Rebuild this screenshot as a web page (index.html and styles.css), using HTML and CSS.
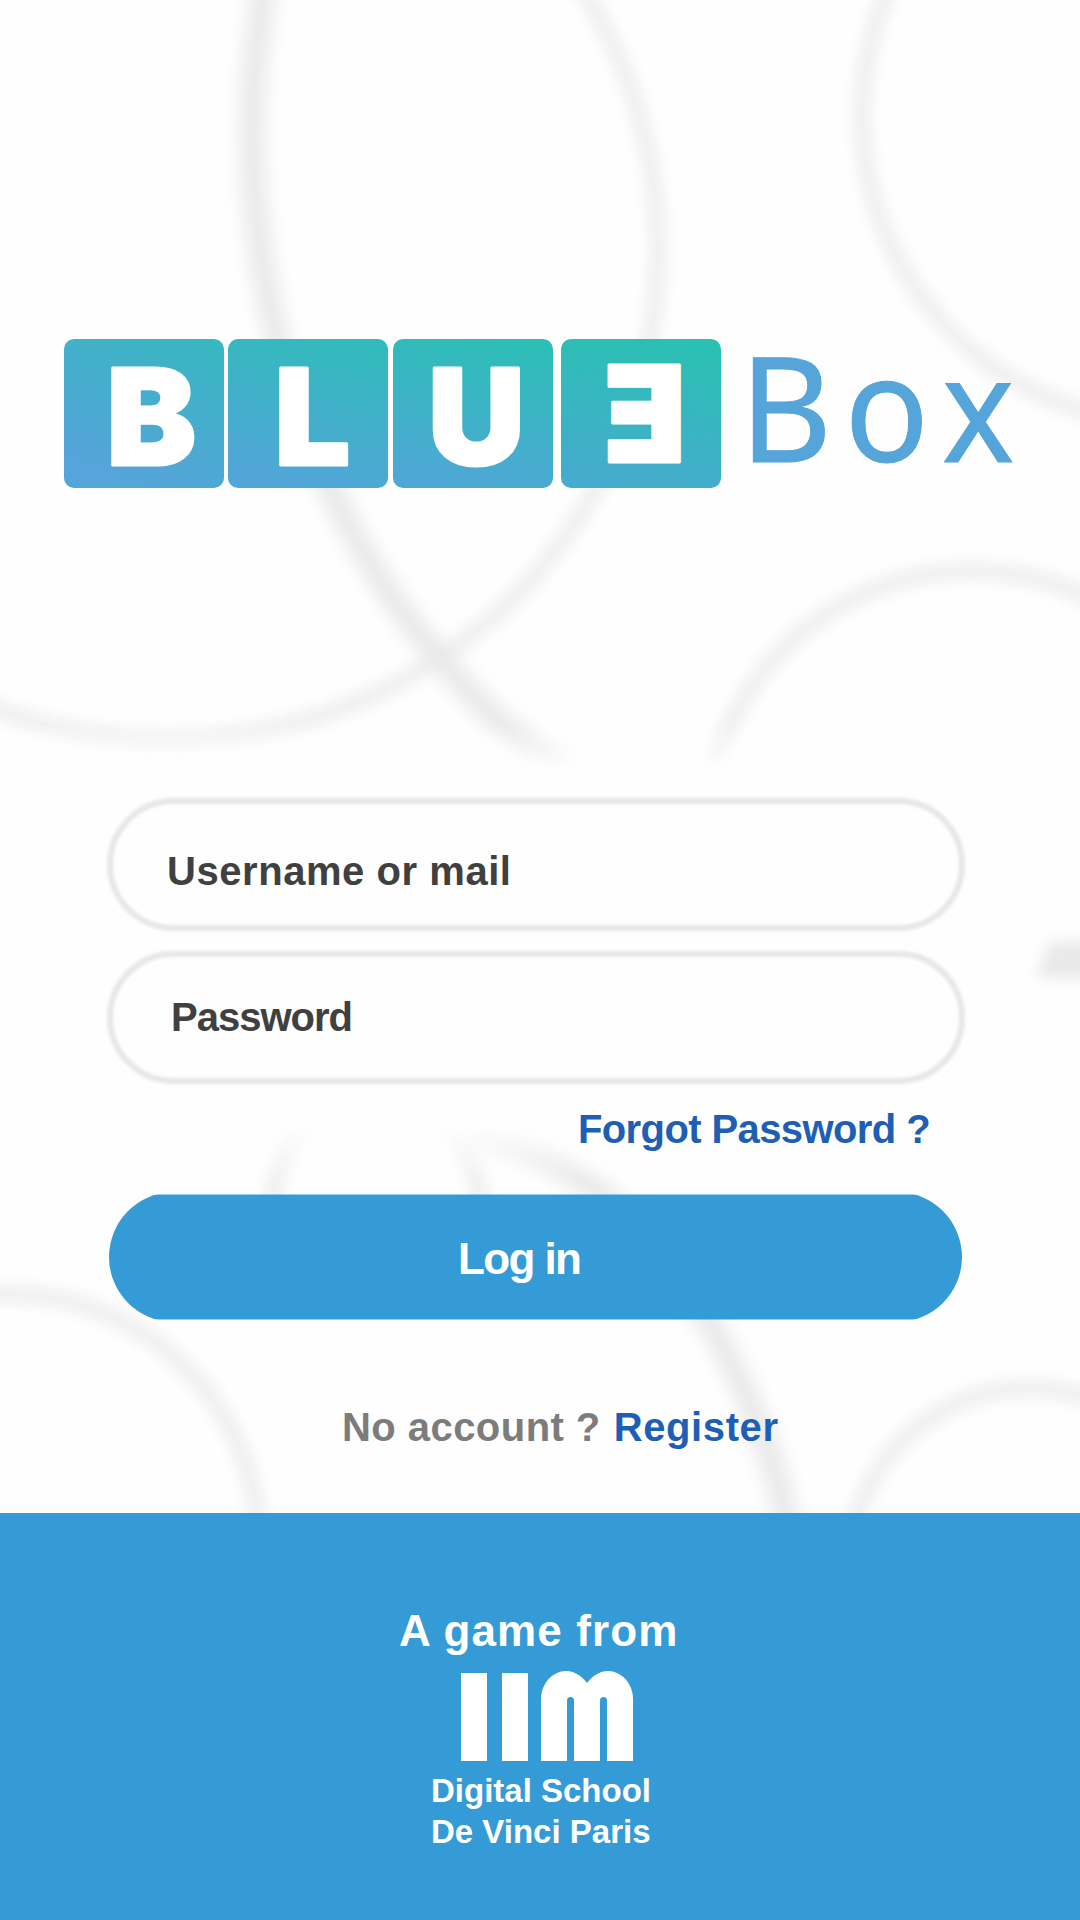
FILE: index.html
```html
<!DOCTYPE html>
<html lang="en">
<head>
<meta charset="utf-8">
<title>Blue Box</title>
<link rel="stylesheet" href="styles.css">
</head>
<body>
<div class="page">
  <svg class="rings" viewBox="0 0 1080 1514" aria-hidden="true">
    <defs>
      <filter id="soft" filterUnits="userSpaceOnUse" x="-400" y="-400" width="2000" height="2300"><feGaussianBlur stdDeviation="7"/></filter>
      <filter id="softer" filterUnits="userSpaceOnUse" x="-400" y="-400" width="2000" height="2300"><feGaussianBlur stdDeviation="9"/></filter>
      <linearGradient id="fadeDown" gradientUnits="userSpaceOnUse" x1="0" y1="725" x2="0" y2="770"><stop stop-color="#fff"/><stop offset="1" stop-color="#000"/></linearGradient>
      <linearGradient id="fadeUp" gradientUnits="userSpaceOnUse" x1="0" y1="1125" x2="0" y2="1180"><stop stop-color="#000"/><stop offset="1" stop-color="#fff"/></linearGradient>
      <mask id="upper" maskUnits="userSpaceOnUse" x="0" y="0" width="1080" height="800"><rect width="1080" height="800" fill="url(#fadeDown)"/></mask>
      <mask id="lower" maskUnits="userSpaceOnUse" x="0" y="1100" width="1080" height="414"><rect y="1100" width="1080" height="414" fill="url(#fadeUp)"/></mask>
    </defs>
    <g mask="url(#upper)">
      <g class="ring" filter="url(#soft)">
        <circle cx="168" cy="250" r="490"/>
        <circle cx="1170" cy="115" r="308"/>
        <circle cx="972" cy="838" r="267"/>
      </g>
      <path class="ring wide" filter="url(#softer)" d="M266-20C246 90 246 210 277 337C288 390 306 440 331 490C362 555 398 612 440 658C480 705 515 742 570 772"/>
    </g>
    <g mask="url(#lower)">
      <g class="ring" filter="url(#soft)">
        <circle cx="8" cy="1545" r="251"/>
        <path d="M306 1120C284 1145 272 1180 271 1215M444 1120C468 1145 480 1180 482 1215"/>
        <circle cx="1030" cy="1569" r="181"/>
      </g>
      <path class="ring wide" filter="url(#softer)" d="M470 1130C580 1160 640 1215 708 1320C748 1390 776 1460 789 1530"/>
    </g>
    <path class="stub" filter="url(#soft)" d="M1050 942H1120V978H1036Z"/>
  </svg>

  <header class="brand">
    <svg class="logo" viewBox="0 0 960 160" role="img" aria-label="BLUE Box">
      <defs>
        <linearGradient id="t1" x1=".3" y1=".9" x2=".75" y2="-.15"><stop stop-color="#55a4da"/><stop offset="1" stop-color="#35b9bf"/></linearGradient>
        <linearGradient id="t2" x1=".4" y1="1" x2=".65" y2="0"><stop stop-color="#52a5d9"/><stop offset="1" stop-color="#32bbbc"/></linearGradient>
        <linearGradient id="t3" x1=".4" y1="1" x2=".6" y2="0"><stop stop-color="#4fa7d6"/><stop offset="1" stop-color="#2dbeb7"/></linearGradient>
        <linearGradient id="t4" x1=".4" y1="1" x2=".6" y2="0"><stop stop-color="#46abce"/><stop offset="1" stop-color="#2ac0b3"/></linearGradient>
      </defs>
      <rect x="4" y="4" width="160" height="149" rx="10" fill="url(#t1)"/>
      <rect x="168" y="4" width="160" height="149" rx="10" fill="url(#t2)"/>
      <rect x="333" y="4" width="160" height="149" rx="10" fill="url(#t3)"/>
      <rect x="501" y="4" width="160" height="149" rx="10" fill="url(#t4)"/>
      <g class="tile-letter">
        <text x="46.5" y="130">B</text>
        <text x="214.5" y="130">L</text>
        <text x="368" y="130">U</text>
        <text transform="translate(625.5 127) scale(-1 1)">E</text>
      </g>
      <g class="box">
        <text transform="translate(679.5 126.5) scale(.97 1)">B</text>
        <text transform="translate(784.5 126.5) scale(.95 1)">o</text>
        <text transform="translate(882 126.5) scale(.93 1)">x</text>
      </g>
    </svg>
  </header>

  <main class="login">
    <label class="field field-user"><span>Username or mail</span></label>
    <label class="field field-pass"><span>Password</span></label>
    <a class="forgot">Forgot Password ?</a>
    <button class="submit" type="button"><span>Log in</span></button>
    <p class="signup"><span class="ask">No account ?</span><a class="register">Register</a></p>
  </main>

  <footer class="credits">
    <p class="from">A game from</p>
    <div class="mark" aria-hidden="true"><i class="bar"></i><i class="bar"></i><i class="arches"><b></b><b></b></i></div>
    <p class="school school-a">Digital School</p>
    <p class="school school-b">De Vinci Paris</p>
  </footer>
</div>
</body>
</html>
```
FILE: styles.css
```css
* { box-sizing: border-box; }
body { margin: 0; background: #fefefe; font-family: "Liberation Sans", Arial, sans-serif; font-weight: 700; }
p { margin: 0; }
.page { position: relative; width: 1080px; height: 1920px; overflow: hidden; display: flex; flex-direction: column; }

.rings { position: absolute; left: 0; top: 0; width: 1080px; height: 1514px; z-index: -1; }
.ring { fill: none; stroke: #eeeeee; stroke-width: 16; }
.wide { stroke: #e7e7e7; stroke-width: 22; }
.stub { fill: #e9e9e9; }

.brand { height: 798px; padding: 335px 60px 0; }
.logo { display: block; width: 960px; height: 160px; overflow: visible; }
.tile-letter { font: 900 134px Inter, sans-serif; fill: #fff; stroke: #fff; stroke-width: 3; stroke-linejoin: round; }
.box { font: 400 147px "Noto Sans", sans-serif; fill: #55a4da; stroke: #55a4da; stroke-width: 1; }

.login { height: 715px; padding: 0 115px 0 107px; display: flex; flex-direction: column; }
.field { position: relative; height: 133px; flex: none; display: flex; align-items: center; color: #404040; font-size: 40px; line-height: 46px; }
.field::before { content: ""; position: absolute; inset: 0; border: 6px solid #e7e7e7; border-radius: 67px; filter: blur(1.4px); background: #fefefe; z-index: -1; }
.field-user { padding: 13px 0 0 60px; letter-spacing: .55px; }
.field-pass { margin-top: 20px; padding: 0 0 2px 64px; letter-spacing: -1px; }
.forgot { align-self: flex-end; margin: 21px 35px 0 0; font-size: 40px; line-height: 48px; letter-spacing: -.6px; color: #1e5fb5; white-space: nowrap; }
.submit { margin: 39px 0 0 2px; width: 853px; height: 130px; flex: none; padding: 4px 0 0 349px; border: 0; border-radius: 65px; clip-path: inset(2.5px 0); background: #359bd6; color: #fff; font: inherit; font-size: 44px; text-align: left; letter-spacing: -1.6px; }
.signup { display: flex; padding-left: 235px; margin-top: 81px; font-size: 40px; line-height: 48px; gap: 13px; white-space: nowrap; }
.ask { color: #7c7c7c; letter-spacing: .45px; }
.register { color: #1e5fb5; letter-spacing: .6px; }

.credits { height: 407px; background: #359bd6; color: #fff; padding-top: 92px; display: flex; flex-direction: column; white-space: nowrap; }
.from { padding-left: 399px; font-size: 44px; line-height: 52px; letter-spacing: 1.1px; }
.mark { display: flex; align-items: flex-end; margin: 14px 0 0 461px; height: 90px; }
.bar { width: 26px; height: 88px; margin-right: 15px; background: #fff; }
.bar + .bar { margin-right: 13px; }
.arches { display: flex; height: 90px; }
.arches b { width: 59px; height: 90px; padding: 26px 0 0 26px; background: #fff; border-radius: 25px 34px 0 0 / 28px 56px 0 0; }
.arches b::after { content: ""; display: block; width: 7px; height: 64px; background: #359bd6; border-radius: 4px 4px 0 0; }
.arches b + b { margin-left: -26px; border-radius: 34px 25px 0 0 / 56px 28px 0 0; }
.school { padding-left: 431px; font-size: 33px; line-height: 41px; }
.school-a { margin-top: 9px; }
```
